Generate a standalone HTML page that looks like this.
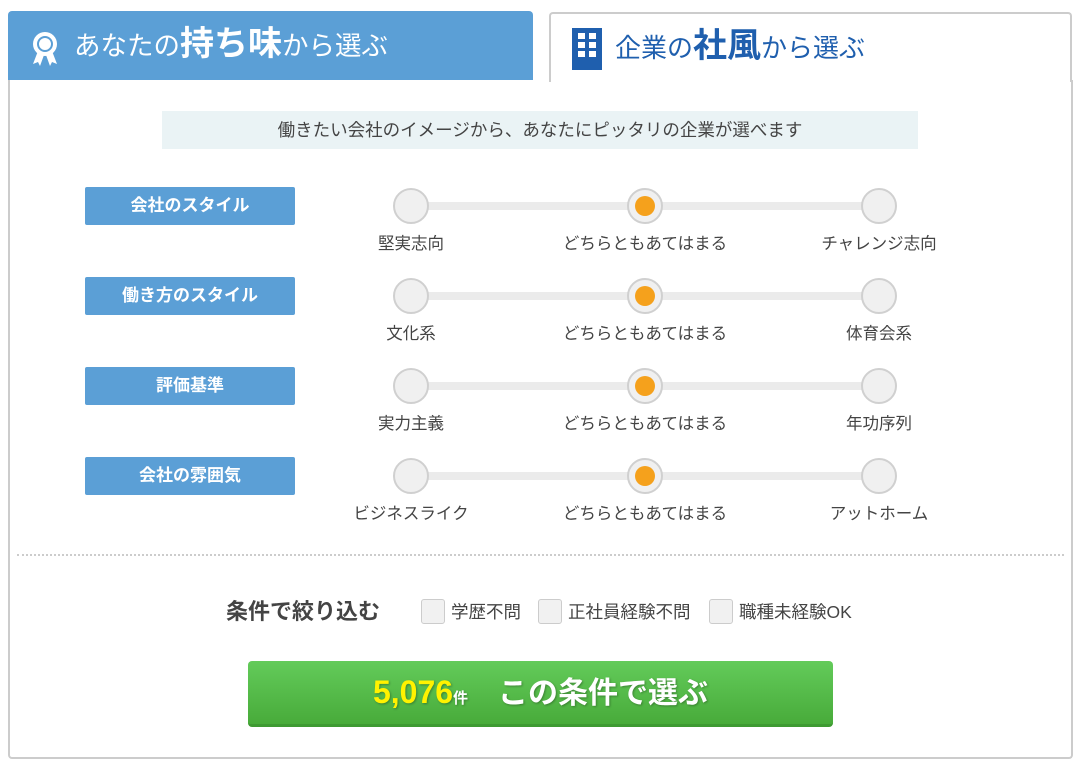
<!DOCTYPE html>
<html><head><meta charset="utf-8"><style>
*{margin:0;padding:0;box-sizing:border-box}
body{width:1083px;height:766px;background:#fff;position:relative;font-family:"Liberation Sans","Noto Sans CJK JP",sans-serif;color:#333;overflow:hidden}
.a{position:absolute}
.tabL{left:8px;top:11px;width:525px;height:69px;background:#5b9fd6;border-radius:4px 4px 0 0;color:#fff}
.tabR{left:549px;top:12px;width:523px;height:70px;background:#fff;border:2px solid #ccc;border-bottom:none;border-radius:4px 4px 0 0;color:#1f5fae}
.panel{left:8px;top:80px;width:1065px;height:679px;border:2px solid #ccc;border-top:none;border-radius:0 0 4px 4px}
.lab{left:85px;width:210px;height:38px;background:#5b9fd6;border-radius:2px;color:#fff;font-weight:bold;font-size:17px;text-align:center;line-height:38px}
.track{left:411px;width:468px;height:8px;background:#ebebeb}
.c{width:36px;height:36px;border-radius:50%;background:#f0f0f0;border:2px solid #d0d0d0}
.c.on::after{content:"";position:absolute;left:6px;top:6px;width:20px;height:20px;border-radius:50%;background:#f5a11c}
.t{font-size:16.5px;width:200px;text-align:center;color:#444}
.cb{width:24px;height:25px;background:#f1f1f1;border:1px solid #ccc;border-radius:3px;top:599px}
.cl{font-size:17.5px;top:599px;color:#444;white-space:nowrap}
</style></head><body>
<div class="a tabL">
<svg class="a" style="left:22px;top:20px" width="30" height="36" viewBox="0 0 30 36"><path d="M8 20 L3 33 L8 31 L10 35 L14 24 Z M22 20 L27 33 L22 31 L20 35 L16 24 Z" fill="#fff"/><circle cx="15" cy="13" r="12" fill="#fff"/><circle cx="15" cy="13" r="7" fill="none" stroke="#5b9fd6" stroke-width="2"/></svg>
<div class="a" style="left:66px;top:10px;font-size:26.5px;line-height:46px;white-space:nowrap">あなたの<b style="font-size:34px">持ち味</b>から選ぶ</div>
</div>
<div class="a tabR">
<svg class="a" style="left:21px;top:14px" width="30" height="42" viewBox="0 0 30 42"><rect width="30" height="42" fill="#1f5fae"/><g fill="#fff"><rect x="6" y="5" width="7" height="6"/><rect x="17" y="5" width="7" height="6"/><rect x="6" y="14" width="7" height="6"/><rect x="17" y="14" width="7" height="6"/><rect x="6" y="23" width="7" height="6"/><rect x="17" y="23" width="7" height="6"/></g></svg>
<div class="a" style="left:64px;top:9px;font-size:26px;line-height:46px;white-space:nowrap">企業の<b style="font-size:34px">社風</b>から選ぶ</div>
</div>
<div class="a panel"></div>
<div class="a" style="left:162px;top:111px;width:756px;height:38px;background:#eaf3f5;font-size:17.5px;text-align:center;line-height:38px;color:#444;white-space:nowrap">働きたい会社のイメージから、あなたにピッタリの企業が選べます</div>

<div class="a lab" style="top:187px">会社のスタイル</div>
<div class="a track" style="top:202px"></div>
<div class="a c" style="left:393px;top:188px"></div><div class="a c on" style="left:627px;top:188px"></div><div class="a c" style="left:861px;top:188px"></div>
<div class="a t" style="left:311px;top:230px">堅実志向</div><div class="a t" style="left:545px;top:230px">どちらともあてはまる</div><div class="a t" style="left:779px;top:230px">チャレンジ志向</div>

<div class="a lab" style="top:277px">働き方のスタイル</div>
<div class="a track" style="top:292px"></div>
<div class="a c" style="left:393px;top:278px"></div><div class="a c on" style="left:627px;top:278px"></div><div class="a c" style="left:861px;top:278px"></div>
<div class="a t" style="left:311px;top:320px">文化系</div><div class="a t" style="left:545px;top:320px">どちらともあてはまる</div><div class="a t" style="left:779px;top:320px">体育会系</div>

<div class="a lab" style="top:367px">評価基準</div>
<div class="a track" style="top:382px"></div>
<div class="a c" style="left:393px;top:368px"></div><div class="a c on" style="left:627px;top:368px"></div><div class="a c" style="left:861px;top:368px"></div>
<div class="a t" style="left:311px;top:410px">実力主義</div><div class="a t" style="left:545px;top:410px">どちらともあてはまる</div><div class="a t" style="left:779px;top:410px">年功序列</div>

<div class="a lab" style="top:457px">会社の雰囲気</div>
<div class="a track" style="top:472px"></div>
<div class="a c" style="left:393px;top:458px"></div><div class="a c on" style="left:627px;top:458px"></div><div class="a c" style="left:861px;top:458px"></div>
<div class="a t" style="left:311px;top:500px">ビジネスライク</div><div class="a t" style="left:545px;top:500px">どちらともあてはまる</div><div class="a t" style="left:779px;top:500px">アットホーム</div>

<div class="a" style="left:17px;top:554px;width:1047px;border-top:2px dotted #ccc"></div>
<div class="a" style="left:226px;top:594px;font-size:22px;font-weight:bold;color:#444;white-space:nowrap">条件で絞り込む</div>
<div class="a cb" style="left:421px"></div><div class="a cl" style="left:451px">学歴不問</div>
<div class="a cb" style="left:538px"></div><div class="a cl" style="left:568px">正社員経験不問</div>
<div class="a cb" style="left:709px"></div><div class="a cl" style="left:739px">職種未経験OK</div>

<div class="a" style="left:248px;top:661px;width:585px;height:66px;border-radius:4px;background:linear-gradient(#63cb5a,#48ab3a);border-bottom:3px solid #3e9a32;text-align:center;line-height:62px;font-weight:bold;color:#fff;font-size:30px;text-shadow:1px 1px 2px rgba(0,0,0,.3);white-space:nowrap">
<span style="color:#fff200;font-size:32px">5,076</span><span style="font-size:15px">件</span>　この条件で選ぶ</div>
</body></html>
